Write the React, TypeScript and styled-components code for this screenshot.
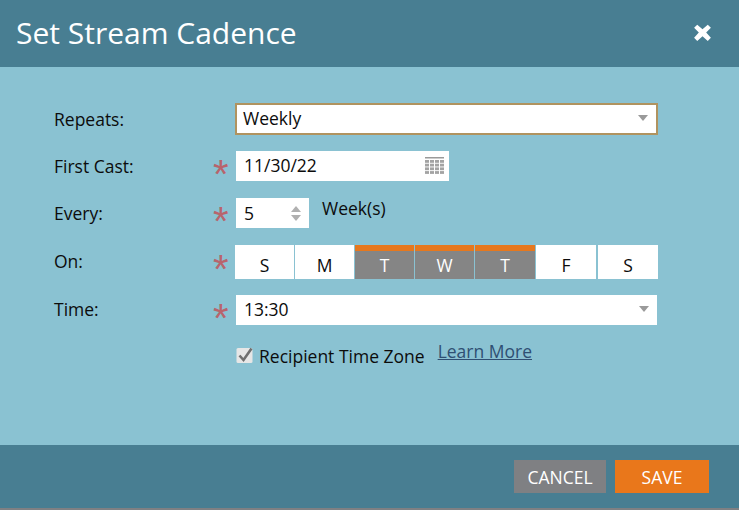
import React from "react";
import styled, { createGlobalStyle } from "styled-components";

const Global = createGlobalStyle`
  html, body { margin: 0; padding: 0; background: #7f8083; }
  body { font-family: "Open Sans", "Liberation Sans", sans-serif; color: #0c0c0c; }
`;

const Dialog = styled.div`
  width: 739px;
  height: 508px;
  display: flex;
  flex-direction: column;
  background: #8ac2d2;
`;

const Header = styled.header`
  height: 67px;
  flex: none;
  background: #487e92;
  display: flex;
  align-items: center;
  justify-content: space-between;
  padding: 0 26px 2px 16px;
  box-sizing: border-box;
`;

const Title = styled.h1`
  margin: 0;
  font-size: 30px;
  font-weight: 400;
  color: #fff;
`;

const Close = styled.svg`
  width: 21px;
  height: 21px;
  display: block;
`;

const Body = styled.main`
  flex: 1;
  padding: 36px 0 0 54px;
  display: flex;
  flex-direction: column;
`;

const Row = styled.div<{ $h: number; $mb: number }>`
  display: grid;
  grid-template-columns: 159px 23px 1fr;
  align-items: center;
  height: ${(p) => p.$h}px;
  margin-bottom: ${(p) => p.$mb}px;
`;

const Label = styled.label<{ $top: number }>`
  font-size: 17.5px;
  line-height: 22px;
  margin-top: ${(p) => p.$top}px;
`;

const Star = styled.span<{ $top?: number }>`
  font-size: 40px;
  line-height: 40px;
  height: 24px;
  margin-top: ${(p) => p.$top ?? 0}px;
  color: #b8646c;
  font-family: "Liberation Sans", sans-serif;
  text-align: left;
`;

const Field = styled.div<{ $w: number; $focus?: boolean; $nudge?: boolean }>`
  box-sizing: border-box;
  width: ${(p) => p.$w}px;
  height: 100%;
  background: #fff;
  display: flex;
  align-items: center;
  justify-content: space-between;
  padding: 0 8px;
  font-size: 17.5px;
  margin-left: ${(p) => (p.$nudge ? -1 : 0)}px;
  border: ${(p) => (p.$focus ? "2px solid #b0935f" : "none")};
  padding-left: ${(p) => (p.$focus ? 6 : 8)}px;
`;

const FieldText = styled.span`
  margin-top: -2px;
`;

const Caret = styled.span`
  width: 0;
  height: 0;
  border-left: 5px solid transparent;
  border-right: 5px solid transparent;
  border-top: 6px solid #9a9a9a;
  margin-top: -2px;
`;

const EveryWrap = styled.div`
  display: flex;
  align-items: flex-start;
  height: 100%;
`;

const Spinner = styled.span`
  display: flex;
  flex-direction: column;
  gap: 3px;
`;

const SpinUp = styled.span`
  width: 0;
  height: 0;
  border-left: 5px solid transparent;
  border-right: 5px solid transparent;
  border-bottom: 6px solid #b0b0b0;
`;

const SpinDown = styled.span`
  width: 0;
  height: 0;
  border-left: 5px solid transparent;
  border-right: 5px solid transparent;
  border-top: 6px solid #b0b0b0;
`;

const Unit = styled.span`
  font-size: 17.5px;
  line-height: 22px;
  margin: -1px 0 0 13px;
`;

const Days = styled.div`
  display: flex;
  width: 423px;
  height: 34px;
  margin-left: -1px;
`;

const Day = styled.button<{ $on?: boolean; $w: number; $gap: number }>`
  box-sizing: border-box;
  flex: none;
  width: ${(p) => p.$w}px;
  margin-right: ${(p) => p.$gap}px;
  height: 34px;
  padding: 0;
  border: none;
  border-top: 6px solid ${(p) => (p.$on ? "#e6781e" : "#fff")};
  background: ${(p) => (p.$on ? "#858585" : "#fff")};
  color: ${(p) => (p.$on ? "#fff" : "#0c0c0c")};
  font: 400 17.5px "Open Sans", sans-serif;
  line-height: 20px;
`;

const CheckRow = styled.div`
  display: flex;
  align-items: flex-start;
  margin-left: 182px;
  height: 30px;
`;

const Box = styled.svg`
  width: 18px;
  height: 18px;
  flex: none;
  margin: 7px 5px 0 0;
`;

const CheckLabel = styled.span`
  font-size: 17.5px;
  line-height: 22px;
  margin-top: 6px;
`;

const Link = styled.a`
  font-size: 17.5px;
  line-height: 22px;
  color: #2f4f72;
  text-decoration: underline;
  margin: 1px 0 0 13px;
`;

const Footer = styled.footer`
  height: 63px;
  flex: none;
  background: #487e92;
  display: flex;
  justify-content: flex-end;
  align-items: flex-start;
  gap: 9px;
  padding: 15px 30px 0 0;
  box-sizing: border-box;
`;

const Action = styled.button<{ $primary?: boolean }>`
  height: 33px;
  width: ${(p) => (p.$primary ? 94 : 92)}px;
  padding: 0;
  border: none;
  background: ${(p) => (p.$primary ? "#e9771b" : "#7f8083")};
  color: #fff;
  font: 400 17.5px "Open Sans", sans-serif;
`;

const days = [
  { t: "S", w: 59, g: 1 },
  { t: "M", w: 59, g: 1 },
  { t: "T", w: 59, g: 1, on: true },
  { t: "W", w: 59, g: 1, on: true },
  { t: "T", w: 60, g: 1, on: true },
  { t: "F", w: 60, g: 2 },
  { t: "S", w: 60, g: 0 },
];

const cells: [number, number][] = [0, 1, 2, 3].flatMap((r) =>
  [0, 1, 2, 3].map((c) => [c, r] as [number, number])
);

export default function App() {
  return (
    <>
      <Global />
      <Dialog>
        <Header>
          <Title>Set Stream Cadence</Title>
          <Close viewBox="0 0 20 20">
            <path d="M5 2.500 10 7l5-4.500 3 3L13.500 10l4.500 5-3 3-5-4.500L5 18l-3-3 4.500-5L2 5.500z" fill="#fff" />
          </Close>
        </Header>
        <Body>
          <Row $h={32} $mb={16}>
            <Label $top={0}>Repeats:</Label>
            <span />
            <Field $w={423} $focus $nudge>
              <FieldText>Weekly</FieldText>
              <Caret />
            </Field>
          </Row>
          <Row $h={30} $mb={17}>
            <Label $top={0}>First Cast:</Label>
            <Star>*</Star>
            <Field $w={213}>
              <FieldText>11/30/22</FieldText>
              <svg width="19" height="18" viewBox="0 0 19 18" style={{ marginRight: -3, marginTop: -1 }}>
                <rect x="0" y="0" width="19" height="1.500" fill="#9a9a9a" />
                {cells.map(([c, r]) => (
                  <rect key={`${c}-${r}`} x={c * 5} y={3 + r * 3.700} width="4" height="2.800" fill="#a3a3a3" />
                ))}
              </svg>
            </Field>
          </Row>
          <Row $h={30} $mb={17}>
            <Label $top={0}>Every:</Label>
            <Star>*</Star>
            <EveryWrap>
              <Field $w={73}>
                5
                <Spinner>
                  <SpinUp />
                  <SpinDown />
                </Spinner>
              </Field>
              <Unit>Week(s)</Unit>
            </EveryWrap>
          </Row>
          <Row $h={34} $mb={16}>
            <Label $top={-2}>On:</Label>
            <Star $top={-3}>*</Star>
            <Days>
              {days.map((d, i) => (
                <Day key={i} $on={d.on} $w={d.w} $gap={d.g}>
                  {d.t}
                </Day>
              ))}
            </Days>
          </Row>
          <Row $h={30} $mb={14}>
            <Label $top={-2}>Time:</Label>
            <Star $top={-1}>*</Star>
            <Field $w={421}>
              <FieldText>13:30</FieldText>
              <Caret />
            </Field>
          </Row>
          <CheckRow>
            <Box viewBox="0 0 18 18">
              <rect x="0.500" y="2" width="16" height="15" rx="1.500" fill="#e6e6e6" />
              <path d="M3.500 9.500 7.500 14 15.500 2.500" fill="none" stroke="#6f6f6f" strokeWidth="2.600" />
            </Box>
            <CheckLabel>Recipient Time Zone</CheckLabel>
            <Link href="#">Learn More</Link>
          </CheckRow>
        </Body>
        <Footer>
          <Action>CANCEL</Action>
          <Action $primary>SAVE</Action>
        </Footer>
      </Dialog>
    </>
  );
}
